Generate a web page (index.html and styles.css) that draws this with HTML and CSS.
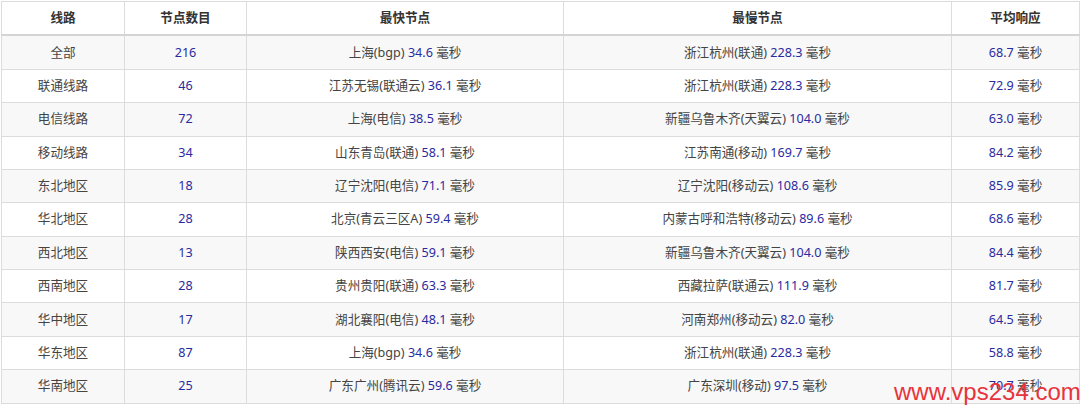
FILE: index.html
```html
<!DOCTYPE html>
<html lang="zh-CN">
<head>
<meta charset="utf-8">
<title>线路节点统计</title>
<link rel="stylesheet" href="styles.css">
</head>
<body>
<div class="wrap">
<table class="stats">
  <colgroup>
    <col class="c1"><col class="c2"><col class="c3"><col class="c4"><col class="c5">
  </colgroup>
  <thead>
    <tr><th>线路</th><th>节点数目</th><th>最快节点</th><th>最慢节点</th><th>平均响应</th></tr>
  </thead>
  <tbody>
    <tr><td>全部</td><td><span class="num">216</span></td><td>上海(bgp) <span class="num">34.6</span> 毫秒</td><td>浙江杭州(联通) <span class="num">228.3</span> 毫秒</td><td><span class="num">68.7</span> 毫秒</td></tr>
    <tr><td>联通线路</td><td><span class="num">46</span></td><td>江苏无锡(联通云) <span class="num">36.1</span> 毫秒</td><td>浙江杭州(联通) <span class="num">228.3</span> 毫秒</td><td><span class="num">72.9</span> 毫秒</td></tr>
    <tr><td>电信线路</td><td><span class="num">72</span></td><td>上海(电信) <span class="num">38.5</span> 毫秒</td><td>新疆乌鲁木齐(天翼云) <span class="num">104.0</span> 毫秒</td><td><span class="num">63.0</span> 毫秒</td></tr>
    <tr><td>移动线路</td><td><span class="num">34</span></td><td>山东青岛(联通) <span class="num">58.1</span> 毫秒</td><td>江苏南通(移动) <span class="num">169.7</span> 毫秒</td><td><span class="num">84.2</span> 毫秒</td></tr>
    <tr><td>东北地区</td><td><span class="num">18</span></td><td>辽宁沈阳(电信) <span class="num">71.1</span> 毫秒</td><td>辽宁沈阳(移动云) <span class="num">108.6</span> 毫秒</td><td><span class="num">85.9</span> 毫秒</td></tr>
    <tr><td>华北地区</td><td><span class="num">28</span></td><td>北京(青云三区A) <span class="num">59.4</span> 毫秒</td><td>内蒙古呼和浩特(移动云) <span class="num">89.6</span> 毫秒</td><td><span class="num">68.6</span> 毫秒</td></tr>
    <tr><td>西北地区</td><td><span class="num">13</span></td><td>陕西西安(电信) <span class="num">59.1</span> 毫秒</td><td>新疆乌鲁木齐(天翼云) <span class="num">104.0</span> 毫秒</td><td><span class="num">84.4</span> 毫秒</td></tr>
    <tr><td>西南地区</td><td><span class="num">28</span></td><td>贵州贵阳(联通) <span class="num">63.3</span> 毫秒</td><td>西藏拉萨(联通云) <span class="num">111.9</span> 毫秒</td><td><span class="num">81.7</span> 毫秒</td></tr>
    <tr><td>华中地区</td><td><span class="num">17</span></td><td>湖北襄阳(电信) <span class="num">48.1</span> 毫秒</td><td>河南郑州(移动云) <span class="num">82.0</span> 毫秒</td><td><span class="num">64.5</span> 毫秒</td></tr>
    <tr><td>华东地区</td><td><span class="num">87</span></td><td>上海(bgp) <span class="num">34.6</span> 毫秒</td><td>浙江杭州(联通) <span class="num">228.3</span> 毫秒</td><td><span class="num">58.8</span> 毫秒</td></tr>
    <tr><td>华南地区</td><td><span class="num">25</span></td><td>广东广州(腾讯云) <span class="num">59.6</span> 毫秒</td><td>广东深圳(移动) <span class="num">97.5</span> 毫秒</td><td><span class="num">70.7</span> 毫秒</td></tr>
  </tbody>
</table>
<div class="watermark">www.vps234.com</div>
</div>
</body>
</html>
```

FILE: styles.css
```css
html, body {
  margin: 0;
  padding: 0;
  background: #ffffff;
}
.wrap {
  position: relative;
  padding: 1px 0 0 1px;
  width: 1080px;
  height: 405px;
  overflow: hidden;
}
.stats {
  border-collapse: collapse;
  table-layout: fixed;
  width: 1078px;
  font-family: "Noto Sans", "Noto Sans CJK SC", sans-serif;
  font-size: 12.6px;
  color: #444;
}
.c1 { width: 123px; }
.c2 { width: 122px; }
.c3 { width: 317px; }
.c4 { width: 388px; }
.c5 { width: 128px; }
.stats th,
.stats td {
  border: 1px solid #dcdcdc;
  text-align: center;
  line-height: 18px;
  padding: 7.2px 4px;
  white-space: nowrap;
}
.stats th {
  font-weight: bold;
  color: #333;
  border-bottom: 2px solid #d4d4d4;
}
.stats tbody tr:nth-child(odd) td {
  background: #f8f8f8;
}
.num {
  color: #2a2aa0;
}
.watermark {
  position: absolute;
  left: 894px;
  top: 378px;
  font-family: "Liberation Sans", Arial, sans-serif;
  font-size: 24px;
  line-height: 28px;
  color: #e8333c;
}
```
